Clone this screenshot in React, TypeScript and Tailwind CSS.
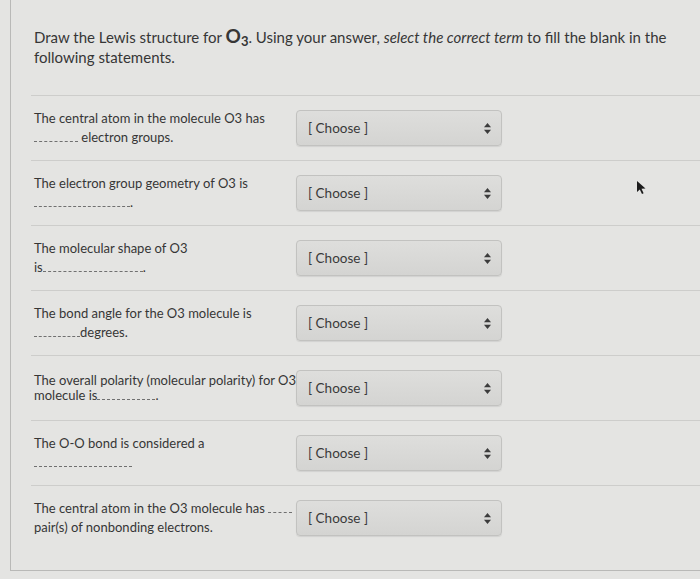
const Blank = ({ w }: { w: number }) => (
  <span
    className="inline-block border-b border-dashed border-[#707070] align-baseline"
    style={{ width: w, height: 1 }}
  />
);

const Select = () => (
  <div className="flex h-[36px] w-[206px] shrink-0 items-center justify-between rounded-[4px] border border-[#c2c2c0] bg-gradient-to-b from-[#dededc] to-[#d4d4d2] pl-[11px] pr-[10px] shadow-[0_1px_1px_rgba(0,0,0,0.08)]">
    <span className="text-[13.5px] text-[#3a3a3a]">[ Choose ]</span>
    <svg width="7" height="11" viewBox="0 0 7 11">
      <path d="M3.5 0 L7 4.3 H0 Z" fill="#3c3c3c" />
      <path d="M3.5 11 L7 6.7 H0 Z" fill="#3c3c3c" />
    </svg>
  </div>
);

const rows: { text: React.ReactNode; tight?: boolean }[] = [
  {
    text: (
      <>
        The central atom in the molecule O3 has
        <br />
        <Blank w={44} /> electron groups.
      </>
    ),
  },
  {
    text: (
      <>
        The electron group geometry of O3 is
        <br />
        <Blank w={96} />.
      </>
    ),
  },
  {
    text: (
      <>
        The molecular shape of O3
        <br />
        is<Blank w={100} />.
      </>
    ),
  },
  {
    text: (
      <>
        The bond angle for the O3 molecule is
        <br />
        <Blank w={46} />degrees.
      </>
    ),
  },
  {
    text: (
      <>
        The overall polarity (molecular polarity) for O3
        <br />
        molecule is<Blank w={58} />.
      </>
    ),
    tight: true,
  },
  {
    text: (
      <>
        The O-O bond is considered a
        <br />
        <Blank w={98} />
      </>
    ),
  },
  {
    text: (
      <>
        The central atom in the O3 molecule has <Blank w={24} />
        <br />
        pair(s) of nonbonding electrons.
      </>
    ),
  },
];

const App = () => {
  return (
    <div
      className="relative h-[579px] w-[700px] overflow-hidden bg-[#e4e4e2] text-[#363636]"
      style={{ fontFamily: 'Lato, "Open Sans", sans-serif' }}
    >
      <div className="ml-[10px] h-[571px] border-b border-l border-[#b9b9b7] pl-[20px]">
        {/* Question header */}
        <p className="pl-[3px] pt-[26px] text-[15px] leading-[20px]">
          Draw the Lewis structure for{' '}
          <b className="text-[19px]">
            O<sub className="text-[13px]">3</sub>
          </b>
          . Using your answer, <i>select the correct term</i> to fill the blank in the
          <br />
          following statements.
        </p>

        <div className="mt-[28px]">
          {rows.map((row, i) => (
            <div
              key={i}
              className="flex h-[65px] items-center border-t border-[#cdcdcb] pl-[3px]"
            >
              <div
                className={`w-[262px] shrink-0 whitespace-nowrap text-[13px] ${
                  row.tight ? 'leading-[15px]' : 'leading-[19px]'
                }`}
              >
                {row.text}
              </div>
              <Select />
            </div>
          ))}
        </div>
      </div>

      {/* mouse pointer */}
      <svg
        className="absolute left-[636px] top-[180px]"
        width="11"
        height="15"
        viewBox="0 0 11 15"
      >
        <path d="M1 1 L1 12 L3.8 9.4 L6 14 L7.6 13.2 L5.5 8.8 L9.5 8.6 Z" fill="#1c1c1c" />
      </svg>
    </div>
  );
};

export default App;
